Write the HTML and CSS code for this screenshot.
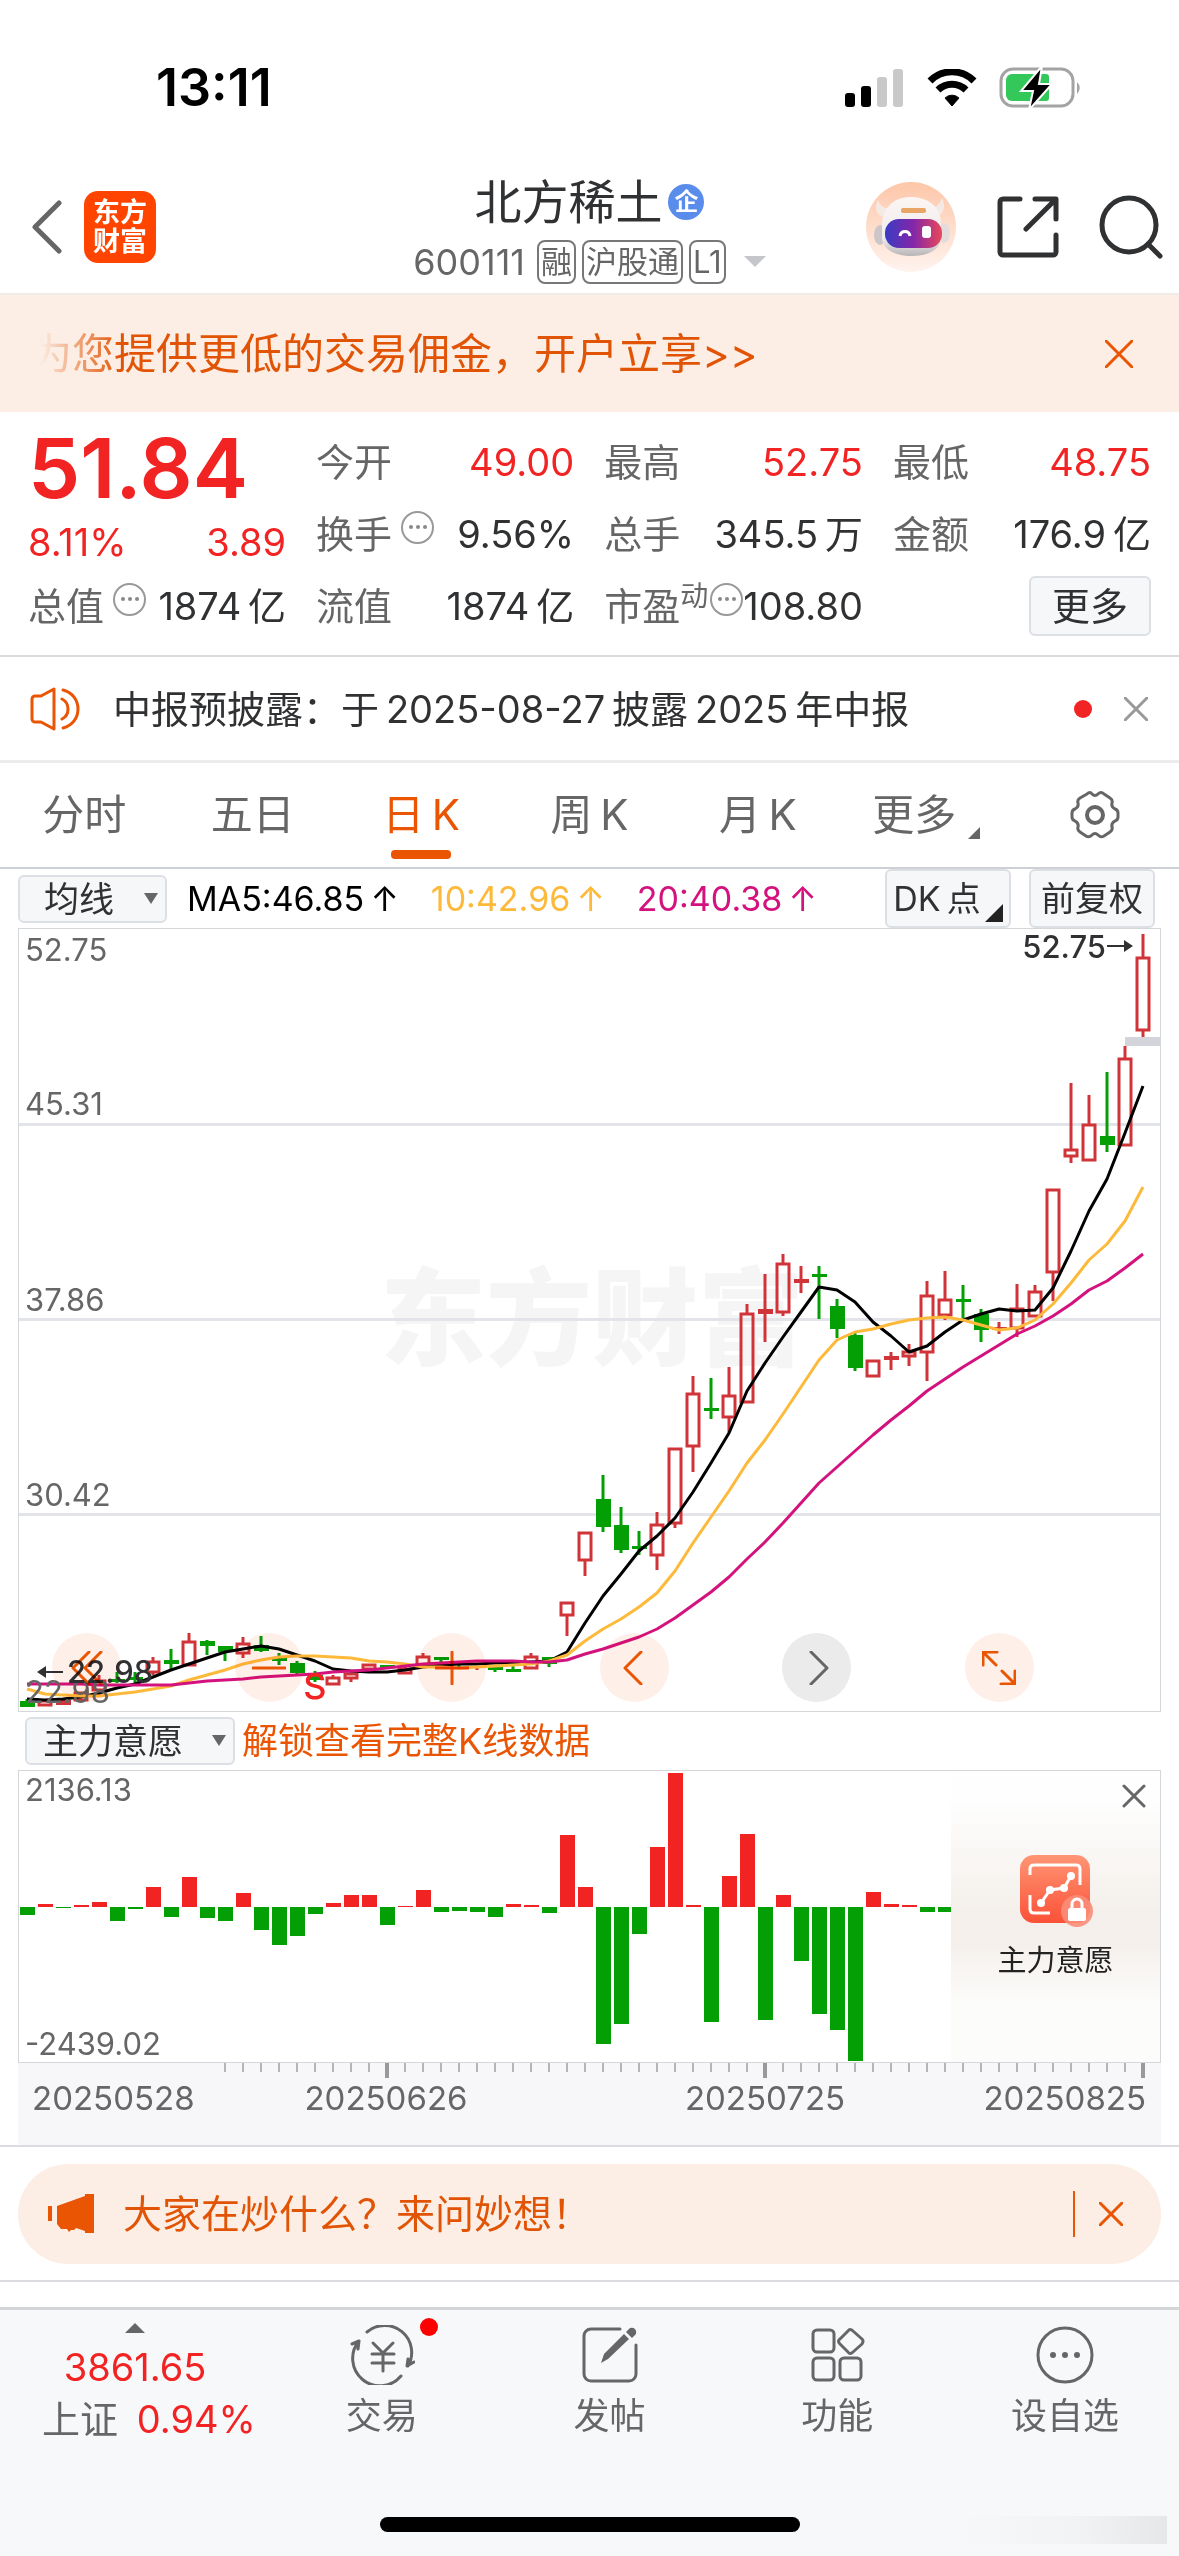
FILE: index.html
```html
<!DOCTYPE html>
<html lang="zh-CN">
<head>
    <meta charset="UTF-8">
    <meta name="viewport" content="width=device-width, initial-scale=1.0">
    <title>北方稀土 600111</title>
    <link rel="stylesheet" href="styles.css">
</head>
<body>

<div class="status-bar">
    <span class="clock">13:11</span>
    <div class="status-icons">
        <svg width="60" height="38" viewBox="0 0 60 38">
            <rect x="0" y="24" width="10" height="14" rx="3"/>
            <rect x="16" y="17" width="10" height="21" rx="3"/>
            <rect x="32" y="8" width="10" height="30" rx="3" fill="#c9c9c9"/>
            <rect x="48" y="0" width="10" height="38" rx="3" fill="#c9c9c9"/>
        </svg>
        <svg width="50" height="38" viewBox="0 0 50 38">
            <path d="M25 37l-7-8a10 10 0 0 1 14 0z" stroke="#000" stroke-width="1"/>
            <path d="M11 21a20 20 0 0 1 28 0" fill="none" stroke="#000" stroke-width="7"/>
            <path d="M3 12a31 31 0 0 1 44 0" fill="none" stroke="#000" stroke-width="7"/>
        </svg>
        <svg width="84" height="44" viewBox="0 0 84 44">
            <rect x="2" y="3" width="72" height="37" rx="12" fill="none" stroke="#a3a3a3" stroke-width="3"/>
            <path d="M78 16v12a8 8 0 0 0 0-12z" fill="#a3a3a3"/>
            <path d="M13 8h34a3 3 0 0 1 3 3v21a3 3 0 0 1-3 3H13a6 6 0 0 1-6-6V14a6 6 0 0 1 6-6z" fill="#34c759"/>
            <path d="M43 0L22 25h12l-4 19 23-26H40z" stroke="#fff" stroke-width="2"/>
        </svg>
    </div>
</div>

<header class="header">
    <div class="header-left">
        <button class="icon-btn" aria-label="返回">
            <svg width="32" height="54" viewBox="0 0 32 54" class="line-grey"><path d="M29 3L5 27l24 24" stroke-width="5"/></svg>
        </button>
        <div class="logo"><span>东方</span><span>财富</span></div>
    </div>
    <div class="stock">
        <h1 class="stock-name">北方稀土<span class="badge-qi">企</span></h1>
        <div class="stock-sub">
            <span class="stock-code">600111</span>
            <span class="tag">融</span><span class="tag">沪股通</span><span class="tag">L1</span>
            <span class="caret"></span>
        </div>
    </div>
    <div class="header-right">
        <button class="icon-btn" aria-label="妙想">
            <svg width="92" height="92" viewBox="0 0 92 92">
                <defs>
                    <linearGradient id="halo" x1="0" y1="0" x2="0" y2="1"><stop offset="0" stop-color="#fdc6a8"/><stop offset="1" stop-color="#fff3ee"/></linearGradient>
                    <linearGradient id="visor" x1="0" y1="0" x2="1" y2="0"><stop offset="0" stop-color="#3a3cc4"/><stop offset=".5" stop-color="#8526a8"/><stop offset="1" stop-color="#e9485a"/></linearGradient>
                    <linearGradient id="helmet" x1="0" y1="0" x2="0" y2="1"><stop offset="0" stop-color="#fbf6f4"/><stop offset=".7" stop-color="#f1ecec"/><stop offset="1" stop-color="#b9b4b6"/></linearGradient>
                </defs>
                <circle cx="46" cy="46" r="45" fill="url(#halo)"/>
                <path d="M13 19c-4 8-2 14 5 17l9-8c-7 0-12-3-14-9zM77 17c4 8 2 15-4 18l-9-8c7 0 11-4 13-10z" fill="#f5e9e4"/>
                <ellipse cx="15" cy="54" rx="6" ry="10" fill="#cdc6c8"/>
                <ellipse cx="79" cy="52" rx="6" ry="10" fill="#e3dcdc"/>
                <path d="M17 44c0-18 13-28 29-28s30 9 30 27v14c0 12-14 18-29 18S19 70 17 58z" fill="url(#helmet)"/>
                <rect x="36" y="27" width="25" height="5" rx="2" fill="#e9a565"/>
                <rect x="20" y="38" width="57" height="29" rx="14" fill="url(#visor)"/>
                <path d="M35 55c1-6 9-6 10 0" fill="none" stroke="#fff" stroke-width="3"/>
                <rect x="57" y="45" width="9" height="12" rx="3" fill="#fff"/>
            </svg>
        </button>
        <button class="icon-btn" aria-label="分享">
            <svg width="62" height="62" viewBox="0 0 62 62" class="line-dark">
                <path d="M23 3H6a3 3 0 0 0-3 3v50a3 3 0 0 0 3 3h50a3 3 0 0 0 3-3V39M38 3h21v20M58 4L29 33"/>
            </svg>
        </button>
        <button class="icon-btn" aria-label="搜索">
            <svg width="64" height="64" viewBox="0 0 64 64" class="line-dark">
                <circle cx="30" cy="30" r="27"/><path d="M49 49l12 12"/>
            </svg>
        </button>
    </div>
</header>

<div class="promo">
    <a class="promo-text" href="#">为您提供更低的交易佣金，开户立享&gt;&gt;</a>
    <button class="icon-btn" aria-label="关闭">
        <svg width="28" height="28" viewBox="0 0 28 28" class="line-orange"><path d="M1 1l26 26M27 1L1 27"/></svg>
    </button>
</div>

<section class="quote">
    <div class="price-box">
        <div class="price">51.84</div>
        <div class="change"><span>8.11%</span><span>3.89</span></div>
    </div>
    <div class="cell"><span class="name">今开</span><span class="red">49.00</span></div>
    <div class="cell"><span class="name">最高</span><span class="red">52.75</span></div>
    <div class="cell"><span class="name">最低</span><span class="red">48.75</span></div>
    <div class="cell"><span class="name">换手<i class="info"></i></span><span>9.56%</span></div>
    <div class="cell"><span class="name">总手</span><span>345.5&thinsp;万</span></div>
    <div class="cell"><span class="name">金额</span><span>176.9&thinsp;亿</span></div>
    <div class="cell"><span class="name">总值<i class="info"></i></span><span>1874&thinsp;亿</span></div>
    <div class="cell"><span class="name">流值</span><span>1874&thinsp;亿</span></div>
    <div class="cell"><span class="name">市盈<sup>动</sup><i class="info tight"></i></span><span>108.80</span></div>
    <div class="cell end"><button class="more-btn">更多</button></div>
</section>

<div class="notice">
    <svg width="52" height="44" viewBox="0 0 52 44" class="line-orange">
        <path d="M2 12a3 3 0 0 1 3-3h6L24 2v40l-13-7H5a3 3 0 0 1-3-3zM32 12c8 4 8 16 0 20M33 3c20 5 20 33 0 38"/>
    </svg>
    <span class="notice-text">中报预披露：于&thinsp;2025-08-27&thinsp;披露&thinsp;2025&thinsp;年中报</span>
    <span class="dot"></span>
    <button class="icon-btn" aria-label="关闭">
        <svg width="24" height="24" viewBox="0 0 24 24" class="line-light"><path d="M1 1l22 22M23 1L1 23"/></svg>
    </button>
</div>

<nav class="tabs">
    <button>分时</button>
    <button>五日</button>
    <button class="active">日&thinsp;K</button>
    <button>周&thinsp;K</button>
    <button>月&thinsp;K</button>
    <button class="has-corner">更多</button>
    <button aria-label="设置">
        <svg width="50" height="50" viewBox="0 0 50 50" class="line-grey">
            <path d="M17 4q3-3 5 0q3 3 6 0q3-3 6 0l6 4q3 2 2 5q-1 4 3 6q3 1 3 4v4q0 3-3 4q-4 2-3 6q1 3-2 5l-6 4q-3 2-6-1q-3-3-6 0q-3 3-6 1l-6-4q-3-2-2-5q1-4-3-6q-3-1-3-4v-4q0-3 3-4q4-2 3-6q-1-3 2-5z" stroke-width="3"/>
            <circle cx="25" cy="25" r="8" stroke-width="4"/>
        </svg>
    </button>
</nav>

<main class="charts">
    <div class="ma-bar">
        <label class="pick pick-ma"><select aria-label="指标"><option>均线</option></select></label>
        <span class="ma">MA5:46.85&thinsp;↑</span>
        <span class="ma ma10">10:42.96&thinsp;↑</span>
        <span class="ma ma20">20:40.38&thinsp;↑</span>
        <button class="flat-btn corner">DK&thinsp;点</button>
        <button class="flat-btn">前复权</button>
    </div>

    <div class="plot">
        <svg id="kline" viewBox="0 0 1141 782"></svg>
        <div class="tools">
            <button aria-label="最左"><svg width="34" height="34" viewBox="0 0 34 34" class="line-orange"><path d="M19 1L3 17l16 16M31 1L15 17l16 16"/></svg></button>
            <button aria-label="缩小"><svg width="34" height="34" viewBox="0 0 34 34" class="line-orange"><path d="M1 17h32"/></svg></button>
            <button aria-label="放大"><svg width="34" height="34" viewBox="0 0 34 34" class="line-orange"><path d="M1 17h32M17 1v32"/></svg></button>
            <button aria-label="左移"><svg width="34" height="34" viewBox="0 0 34 34" class="line-orange"><path d="M24 1L8 17l16 16"/></svg></button>
            <button class="off" aria-label="右移"><svg width="34" height="34" viewBox="0 0 34 34" class="line-grey"><path d="M11 1l16 16-16 16" stroke-width="3"/></svg></button>
            <button aria-label="全屏"><svg width="34" height="34" viewBox="0 0 34 34" class="line-orange"><path d="M1 14V1h14M2 2l12 12M33 20v13H19M32 32L20 20"/></svg></button>
        </div>
    </div>

    <div class="sub-bar">
        <label class="pick pick-sub"><select aria-label="副图指标"><option>主力意愿</option></select></label>
        <a href="#">解锁查看完整K线数据</a>
    </div>

    <div class="plot">
        <svg id="power" viewBox="0 0 1141 291"></svg>
        <div class="lock-panel">
            <button class="icon-btn lock-close" aria-label="关闭">
                <svg width="24" height="24" viewBox="0 0 24 24" class="line-grey"><path d="M2 2l20 20M22 2L2 22" stroke-width="3"/></svg>
            </button>
            <svg width="76" height="76" viewBox="0 0 76 76">
                <defs><linearGradient id="lk" x1="0" y1="0" x2="0" y2="1"><stop offset="0" stop-color="#ff9574"/><stop offset="1" stop-color="#fb5138"/></linearGradient></defs>
                <rect x="2" y="2" width="70" height="68" rx="14" fill="url(#lk)"/>
                <path d="M12 22v-6q0-4 4-4h42q4 0 4 4v16M12 42v14q0 4 4 4h16" fill="none" stroke="#fff" stroke-width="3"/>
                <path d="M23 50l9-13 14-2 7-12" fill="none" stroke="#fff" stroke-width="3"/>
                <g fill="#fff"><circle cx="23" cy="50" r="4"/><circle cx="32" cy="37" r="4"/><circle cx="46" cy="35" r="4"/><circle cx="53" cy="23" r="4"/></g>
                <circle cx="59" cy="58" r="16" fill="#fb8d78" opacity=".9"/>
                <rect x="50" y="55" width="18" height="13" rx="2" fill="#fff"/>
                <path d="M54 56v-5a5 5 0 0 1 10 0v5" fill="none" stroke="#fff" stroke-width="3"/>
            </svg>
            <span>主力意愿</span>
        </div>
    </div>
    <div class="axis"><svg id="axis" viewBox="0 0 1143 82"></svg></div>
</main>

<div class="ask-wrap">
    <div class="ask">
        <svg width="46" height="40" viewBox="0 0 46 40" fill="#ea5504"><path d="M0 12h4v15H0zM9 12l28-10V0h9v39h-9v-2l-9-3-2 2h-3l-2 2-2-3h-6l-4-5z"/></svg>
        <a href="#">大家在炒什么？来问妙想！</a>
        <span class="split"></span>
        <button class="icon-btn" aria-label="关闭">
            <svg width="24" height="24" viewBox="0 0 24 24" class="line-orange"><path d="M1 1l22 22M23 1L1 23"/></svg>
        </button>
    </div>
</div>

<footer class="bottom">
    <nav class="bottom-nav">
        <button class="index">
            <span class="up"></span>
            <span class="red">3861.65</span>
            <span>上证 <b>0.94%</b></span>
        </button>
        <button>
            <svg width="66" height="60" viewBox="0 0 66 60" class="line-grey">
                <path d="M18 7a27 27 0 0 1 41 34M52 51A27 27 0 0 1 10 16M3 19l7-3-1 8M65 37l-7 4 1-7" stroke-width="3"/>
                <path d="M24 18l10 10 10-10M34 28v18M23 29h22M23 38h22" stroke-width="3"/>
            </svg>
            <span>交易</span>
            <i class="dot"></i>
        </button>
        <button>
            <svg width="56" height="60" viewBox="0 0 56 60" class="line-grey">
                <path d="M38 4H9a7 7 0 0 0-7 7v38a7 7 0 0 0 7 7h38a7 7 0 0 0 7-7V20" stroke-width="3"/>
                <path d="M19 38l3-9 20-20 5 5-21 20zM44 7l4-4q3-1 5 1t1 5l-4 4z" fill="#666" stroke="none"/>
            </svg>
            <span>发帖</span>
        </button>
        <button>
            <svg width="56" height="60" viewBox="0 0 56 60" class="line-grey">
                <g stroke-width="3">
                    <rect x="4" y="5" width="21" height="22" rx="4"/><rect x="4" y="33" width="21" height="22" rx="4"/><rect x="31" y="33" width="21" height="22" rx="4"/>
                    <path d="M39 6q2-3 5 0l9 8q2 2 0 5l-9 8q-3 3-5 0l-8-8q-3-3 0-5z"/>
                </g>
            </svg>
            <span>功能</span>
        </button>
        <button>
            <svg width="60" height="60" viewBox="0 0 60 60" class="line-grey">
                <circle cx="30" cy="30" r="27" stroke-width="3"/>
                <g fill="#666" stroke="none"><circle cx="18" cy="30" r="3"/><circle cx="30" cy="30" r="3"/><circle cx="42" cy="30" r="3"/></g>
            </svg>
            <span>设自选</span>
        </button>
    </nav>
    <div class="home-row">
        <span class="home"></span>
        <span class="smudge"></span>
    </div>
</footer>

<script src="chart.js"></script>
</body>
</html>
```
FILE: styles.css
```css
* { box-sizing: border-box; }
body { margin: 0; min-height: 100vh; display: flex; flex-direction: column; background: #fff; color: #303133; font-family: Inter, "Noto Sans CJK SC", sans-serif; font-size: 38px; line-height: 48px; }
button, select { font: inherit; color: inherit; border: none; background: none; padding: 0; margin: 0; cursor: pointer; }
a { color: inherit; text-decoration: none; }
svg { display: block; flex: none; }
.icon-btn { display: block; flex: none; }
.red { color: #f12323; }
.dot { width: 18px; height: 18px; border-radius: 50%; background: #f12323; flex: none; }

/* line icons */
.line-grey, .line-dark, .line-orange, .line-light { fill: none; stroke-linecap: round; stroke-linejoin: round; }
.line-grey { stroke: #666; }
.line-dark { stroke: #303133; stroke-width: 5; }
.line-orange { stroke: #ea5504; stroke-width: 3; }
.line-light { stroke: #999; stroke-width: 3; }

.status-bar { display: flex; justify-content: space-between; align-items: center; height: 160px; padding: 16px 96px 0 156px; }
.clock { font-size: 52px; font-weight: 600; color: #000; }
.status-icons { display: flex; align-items: center; gap: 22px; }

.header { display: grid; grid-template-columns: 1fr auto 1fr; align-items: center; height: 133px; padding: 0 16px; }
.header-left { display: flex; align-items: center; gap: 22px; padding-left: 14px; }
.logo { display: flex; flex-direction: column; align-items: center; justify-content: center; width: 72px; height: 72px; border-radius: 14px; background: #ff4400; color: #fff; font-size: 27px; line-height: 29px; font-weight: 700; }
.stock { display: flex; flex-direction: column; align-items: center; gap: 12px; padding-top: 6px; }
.stock-name { display: flex; align-items: center; gap: 6px; margin: 0; font-size: 47px; line-height: 52px; font-weight: 400; }
.badge-qi { width: 36px; height: 36px; border-radius: 50%; background: #5a8cec; color: #fff; font-size: 24px; line-height: 35px; text-align: center; font-weight: 700; }
.stock-sub { display: flex; align-items: center; gap: 6px; font-size: 36px; line-height: 44px; color: #666; }
.stock-code { margin-right: 6px; }
.tag { border: 2px solid #777; border-radius: 8px; padding: 0 2px; font-size: 31px; line-height: 40px; }
.caret { margin-left: 12px; border: 11px solid transparent; border-top-color: #c4c6ca; border-bottom: none; }
.header-right { display: flex; align-items: center; justify-content: flex-end; gap: 40px; }

.promo { display: flex; align-items: center; justify-content: space-between; height: 119px; padding: 0 46px 0 30px; background: #fceee5; border-top: 2px solid #efebe9; color: #e25405; }
.promo-text { font-size: 42px; -webkit-mask-image: linear-gradient(90deg, transparent 10px, #000 90px); mask-image: linear-gradient(90deg, transparent 10px, #000 90px); }

.quote { display: grid; grid-template-columns: repeat(4, 1fr); grid-auto-rows: 72px; column-gap: 30px; padding: 14px 28px 13px; border-bottom: 2px solid #d8dadd; }
.price-box { grid-row: span 2; color: #f12323; }
.price { font-size: 83px; line-height: 84px; font-weight: 600; }
.change { display: flex; justify-content: space-between; line-height: 64px; }
.cell { display: flex; align-items: center; justify-content: space-between; white-space: nowrap; }
.cell.end { justify-content: flex-end; }
.name { display: flex; align-items: center; color: #666; }
.name sup { align-self: flex-start; font-size: 28px; line-height: 28px; }
.info { display: flex; align-items: center; justify-content: center; width: 33px; height: 33px; margin: 0 0 14px 9px; border: 2px solid #999; border-radius: 50%; }
.info.tight { margin-left: 2px; }
.info::before { content: ""; width: 4px; height: 4px; border-radius: 50%; background: #888; box-shadow: -7px 0 #888, 7px 0 #888; }
.more-btn { width: 122px; height: 60px; border: 2px solid #dcdfe3; border-radius: 6px; background: #f6f7f9; }

.notice { display: flex; align-items: center; height: 106px; padding: 0 31px 0 30px; border-bottom: 3px solid #ececee; }
.notice-text { flex: 1; margin-left: 31px; }
.notice .dot { margin-right: 32px; }

.tabs { display: grid; grid-template-columns: repeat(7, 1fr); height: 106px; border-bottom: 2px solid #cdd0d4; font-size: 42px; color: #666; }
.tabs button { position: relative; display: flex; align-items: center; justify-content: center; }
.tabs .active { color: #ea5504; }
.tabs .active::after { content: ""; position: absolute; bottom: 8px; width: 60px; height: 9px; border-radius: 4px; background: #ea5504; }
.tabs .has-corner::after { content: ""; align-self: flex-end; margin: 0 0 28px 12px; border: 6px solid transparent; border-right-color: #666; border-bottom-color: #666; }

.charts { padding: 0 18px; border-bottom: 2px solid #dadcdf; font-size: 35px; }
.ma-bar { display: flex; align-items: center; height: 59px; font-size: 34px; }
.ma { margin-left: 20px; color: #000; }
.ma10 { margin-left: 32px; color: #fdb93a; }
.ma20 { margin-left: 32px; color: #d4127e; }
.pick { position: relative; }
.pick select { display: block; height: 48px; border: 2px solid #dcdfe3; border-radius: 6px; background: #f6f7f9; appearance: none; font-size: 35px; line-height: 44px; }
.pick::after { content: ""; position: absolute; right: 9px; top: 18px; border: 7px solid transparent; border-top: 11px solid #666; border-bottom: none; pointer-events: none; }
.pick-ma select { width: 149px; padding-left: 24px; }
.pick-sub select { width: 210px; padding-left: 16px; }
.flat-btn { height: 59px; width: 126px; border: 2px solid #dcdfe3; border-radius: 6px; background: #f6f7f9; }
.flat-btn + .flat-btn { margin: 0 6px 0 18px; }
.corner { position: relative; margin-left: auto; padding-right: 22px; }
.corner::after { content: ""; position: absolute; right: 6px; bottom: 4px; border: 9px solid transparent; border-right-color: #222; border-bottom-color: #222; }

.plot { position: relative; border: 1px solid #d5d8db; }
.plot > svg, .axis > svg { width: 100%; height: auto; overflow: visible; }
.plot text, .axis text { font-size: 31px; fill: #666; }
.tools { position: absolute; left: 0; right: 0; bottom: 9px; display: flex; justify-content: space-between; padding: 0 126px 0 33px; mix-blend-mode: multiply; }
.tools button { display: flex; align-items: center; justify-content: center; width: 69px; height: 69px; border-radius: 50%; background: #fef0e9; }
.tools .off { background: #ebebeb; }
.plot .watermark { font-size: 106px; font-weight: 900; fill: #f5f5f6; }
.plot .extreme { fill: #303133; font-weight: 500; }
.plot .sell { font-size: 36px; font-weight: 500; fill: #f12323; }

.sub-bar { display: flex; align-items: center; gap: 7px; height: 58px; padding-left: 7px; }
.sub-bar a { font-size: 36px; color: #ea5504; }
.lock-panel { position: absolute; right: 0; top: 0; bottom: 0; width: 209px; display: flex; flex-direction: column; align-items: center; justify-content: center; gap: 12px; background: linear-gradient(#fefefe 10%, #f4efea 50%, #f5f0ec 60%, #fcfcfb 80%); color: #222; font-size: 29px; line-height: 40px; }
.lock-close { position: absolute; right: 14px; top: 13px; }
.axis { background: #f7f7f9; }
.axis text { font-size: 33px; }

.ask-wrap { padding: 17px 18px 16px; border-bottom: 2px solid #dadcdf; }
.ask { display: flex; align-items: center; height: 100px; padding: 0 38px 0 30px; border-radius: 50px; background: #fceee5; color: #e25405; font-size: 39px; }
.ask a { flex: 1; margin-left: 29px; }
.split { width: 2px; height: 46px; margin-right: 24px; background: #ea5504; }

.bottom { margin-top: auto; background: #f7f8fa; border-top: 3px solid #d3d5d9; }
.bottom-nav { display: grid; grid-template-columns: 268px repeat(4, 1fr); padding-top: 13px; color: #666; font-size: 36px; }
.bottom-nav button { position: relative; display: flex; flex-direction: column; align-items: center; padding-top: 2px; gap: 7px; }
.bottom-nav .index { gap: 4px; padding: 0 0 0 28px; font-size: 38px; }
.index span { align-self: center; margin-right: 26px; }
.index span:last-child { margin-right: 0; align-self: flex-start; padding-left: 14px; white-space: nowrap; }
.index b { margin-left: 8px; font-weight: 400; color: #f12323; }
.up { border: 10px solid transparent; border-bottom-color: #666; border-top: none; }
.bottom-nav .red { margin-top: 6px; }
.bottom-nav .dot { position: absolute; top: -5px; left: 60%; margin-left: 15px; background: #f00; }
.home-row { position: relative; display: flex; justify-content: center; padding: 74px 0 24px; }
.home { width: 420px; height: 15px; border-radius: 8px; background: #000; }
.smudge { position: absolute; right: 12px; bottom: 12px; width: 210px; height: 28px; background: linear-gradient(90deg, #f7f8fa, #f1f2f3 60%, #e6e7e8); }
```
FILE: chart.js
```js
// one candle every 18 units, first one centred at 8
const STEP = 18;
const X0 = 8;
const UP = '#d13438';
const DOWN = '#049f04';

// [up, body top, body bottom, high, low]
const candles = [
    [0, 772, 778, 770, 778], [1, 771, 777, 771, 777], [1, 771, 776, 771, 776], [1, 763, 772, 763, 772],
    [1, 751, 762, 746, 768], [0, 750, 753, 743, 754], [0, 748, 751, 743, 754], [1, 732, 744, 728, 746],
    [0, 731, 735, 720, 741], [1, 712, 737, 704, 737], [0, 712, 717, 711, 726], [0, 717, 723, 717, 732],
    [1, 714, 725, 708, 729], [0, 716, 722, 707, 723], [0, 728, 732, 724, 736], [0, 734, 744, 732, 747],
    [0, 746, 751, 742, 753], [1, 748, 756, 746, 756], [1, 744, 750, 744, 753], [1, 735, 741, 735, 741],
    [0, 736, 739, 736, 739], [1, 739, 745, 735, 745], [1, 727, 737, 724, 737], [0, 728, 731, 728, 735],
    [0, 732, 735, 732, 738], [1, 737, 739, 737, 741], [0, 738, 741, 738, 743], [0, 740, 743, 737, 743],
    [1, 727, 740, 724, 740], [0, 728, 735, 728, 738], [1, 673, 687, 673, 707], [1, 603, 632, 603, 647],
    [0, 570, 598, 546, 603], [0, 596, 621, 578, 624], [0, 617, 620, 602, 626], [1, 595, 627, 583, 641],
    [1, 519, 595, 519, 599], [1, 464, 518, 447, 543], [0, 479, 482, 449, 490], [1, 466, 489, 438, 503],
    [1, 384, 474, 375, 474], [1, 380, 385, 345, 413], [1, 334, 384, 325, 387], [1, 350, 354, 337, 364],
    [0, 345, 348, 337, 390], [0, 377, 400, 370, 409], [0, 406, 439, 404, 442], [1, 431, 448, 431, 448],
    [1, 427, 431, 423, 441], [1, 422, 428, 415, 437], [1, 366, 424, 352, 452], [1, 370, 387, 342, 391],
    [0, 370, 373, 356, 389], [0, 385, 401, 380, 413], [1, 398, 401, 393, 405], [1, 379, 400, 355, 408],
    [1, 362, 388, 356, 388], [1, 260, 344, 260, 372], [1, 220, 228, 154, 234], [1, 195, 232, 166, 232],
    [0, 207, 216, 143, 223], [1, 129, 217, 117, 217], [1, 28, 102, 5, 108]
];

const ma5 = [770, 771, 770, 768, 764, 759, 755, 748, 741, 735, 729, 723, 720, 717, 720, 726, 732, 740, 742, 743, 743, 741, 738, 736, 735, 735, 734, 734, 733, 732, 723, 694, 667, 645, 622, 607, 589, 563, 534, 504, 462, 434, 408, 383, 358, 361, 373, 393, 407, 423, 417, 403, 391, 385, 380, 382, 381, 359, 322, 282, 250, 204, 157];
const ma10 = [760, 765, 766, 767, 767, 765, 763, 760, 757, 751, 746, 741, 735, 731, 728, 727, 727, 728, 729, 732, 733, 735, 738, 738, 739, 738, 737, 736, 735, 732, 726, 712, 700, 690, 678, 664, 642, 614, 588, 562, 534, 511, 485, 458, 431, 411, 403, 400, 395, 391, 389, 388, 391, 396, 401, 399, 391, 375, 354, 331, 315, 292, 258];
const ma20 = [755, 755, 755, 755, 756, 756, 756, 756, 756, 754, 752, 751, 750, 748, 747, 746, 745, 743, 742, 741, 739, 737, 735, 734, 733, 732, 732, 732, 733, 733, 731, 725, 720, 714, 708, 700, 689, 676, 663, 648, 630, 613, 594, 574, 554, 538, 522, 506, 491, 477, 462, 450, 438, 427, 416, 405, 397, 387, 375, 361, 352, 339, 325];

const power = [-8, 3, -1, 2, 5, -14, -2, 20, -10, 30, -11, -14, 14, -23, -38, -29, -7, 4, 12, 12, -18, 1, 17, -5, -4, -5, -10, 3, 2, -6, 72, 20, -137, -117, -27, 60, 134, 2, -115, 31, 73, -113, 12, -54, -107, -123, -154, 15, 3, 2, -5, -5];

const x = i => X0 + i * STEP;
const line = (data, color) =>
    `<polyline points="${data.map((y, i) => x(i) + ',' + y).join(' ')}" fill="none" stroke="${color}" stroke-width="3" stroke-linejoin="round"/>`;

function drawKline() {
    let s = '<text class="watermark" x="361" y="428">东方财富</text>';
    [196, 391, 586].forEach(y => s += `<rect x="0" y="${y - 2}" width="1141" height="3" fill="#e3e4ea"/>`);
    s += '<rect x="1106" y="108" width="35" height="9" fill="#d3d5db"/>';
    candles.forEach(([up, top, bottom, high, low], i) => {
        const color = up ? UP : DOWN;
        s += `<path d="M${x(i)} ${high}V${top}M${x(i)} ${bottom}V${low}" stroke="${color}" stroke-width="3"/>`;
        if (up && bottom - top > 5) {
            s += `<rect x="${x(i) - 6}" y="${top + 1}" width="12" height="${bottom - top - 2}" fill="none" stroke="${color}" stroke-width="3"/>`;
        } else {
            s += `<rect x="${x(i) - 7}" y="${top}" width="15" height="${bottom - top}" fill="${color}"/>`;
        }
    });
    s += line(ma5, '#000') + line(ma10, '#fdb93a') + line(ma20, '#d4127e');
    [['52.75', 32], ['45.31', 186], ['37.86', 382], ['30.42', 577], ['22.98', 774]].forEach(([t, y]) => {
        s += `<text x="6" y="${y}">${t}</text>`;
    });
    s += '<text class="extreme" x="1087" y="29" text-anchor="end">52.75</text><path d="M1088 17h20" stroke="#303133" stroke-width="2"/><path d="M1105 11l9 6-9 6z" fill="#303133"/>';
    s += '<text class="extreme" x="48" y="754">22.98</text><path d="M44 743H24" stroke="#303133" stroke-width="2"/><path d="M27 737l-9 6 9 6z" fill="#303133"/>';
    s += '<text class="sell" x="296" y="770" text-anchor="middle">S</text>';
    document.getElementById('kline').innerHTML = s;
}

function drawPower() {
    let s = '';
    power.forEach((v, i) => {
        s += `<rect x="${x(i) - 7}" y="${v > 0 ? 136 - v : 136}" width="15" height="${Math.abs(v)}" fill="${v > 0 ? '#f12323' : DOWN}"/>`;
    });
    s += '<text x="6" y="30">2136.13</text><text x="6" y="284">-2439.02</text>';
    document.getElementById('power').innerHTML = s;
}

function drawAxis() {
    let s = '';
    for (let i = 11; i <= 62; i++) {
        const major = i === 20 || i === 41 || i === 62;
        s += `<rect x="${x(i) + (major ? -1 : 0)}" y="0" width="${major ? 4 : 2}" height="${major ? 15 : 9}" fill="${major ? '#999' : '#b5b5b8'}"/>`;
    }
    s += '<text x="14" y="47">20250528</text><text x="368" y="47" text-anchor="middle">20250626</text>';
    s += '<text x="747" y="47" text-anchor="middle">20250725</text><text x="1128" y="47" text-anchor="end">20250825</text>';
    document.getElementById('axis').innerHTML = s;
}

drawKline();
drawPower();
drawAxis();
```
